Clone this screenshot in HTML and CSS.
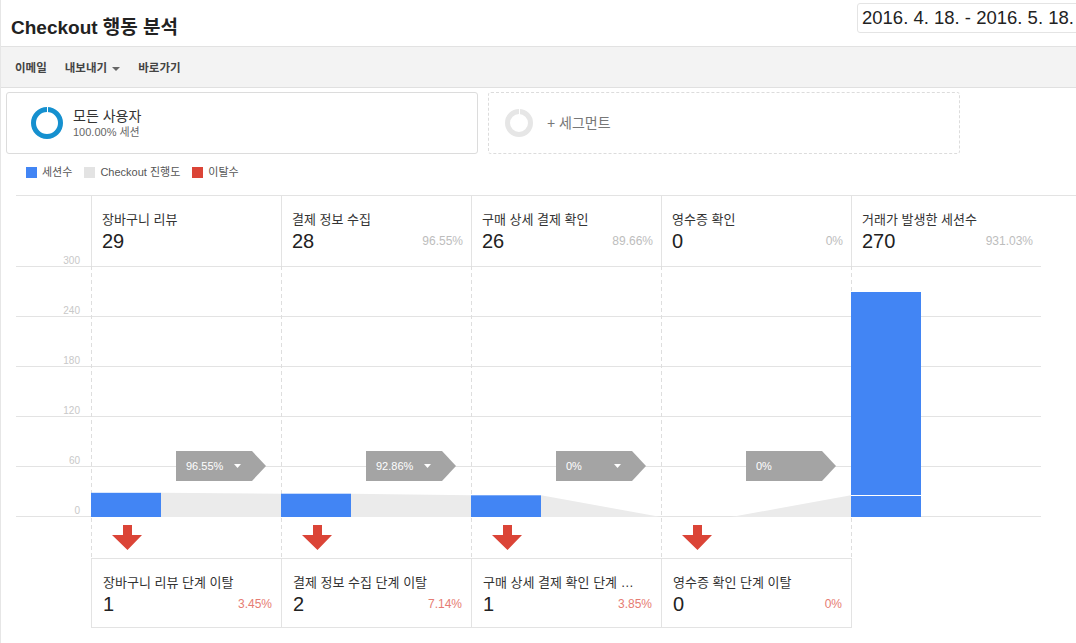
FILE: index.html
```html
<!DOCTYPE html>
<html lang="ko">
<head>
    <meta charset="UTF-8">
    <meta name="viewport" content="width=device-width, initial-scale=1.0">
    <title>Checkout 행동 분석</title>
    <link rel="stylesheet" href="styles.css">
</head>
<body>
<div class="page">
    <header class="report-header">
        <h1 class="report-title">Checkout 행동 분석</h1>
        <div class="date-range">2016. 4. 18. - 2016. 5. 18.</div>
    </header>

    <nav class="toolbar">
        <span class="tool">이메일</span>
        <span class="tool">내보내기 <span class="caret"></span></span>
        <span class="tool">바로가기</span>
    </nav>

    <section class="segments">
        <div class="segment-card">
            <svg class="donut" viewBox="0 0 32 32">
                <circle cx="16" cy="16" r="13.5" fill="none" stroke="#1590cf" stroke-width="5"/>
                <rect x="16" y="0" width="1" height="6" fill="#fff"/>
            </svg>
            <div>
                <div class="segment-name">모든 사용자</div>
                <div class="segment-sub">100.00% 세션</div>
            </div>
        </div>
        <div class="segment-card add">
            <svg class="donut small" viewBox="0 0 28 28">
                <circle cx="14" cy="14" r="11.5" fill="none" stroke="#e6e6e6" stroke-width="5"/>
                <rect x="14" y="0" width="1" height="6" fill="#fff"/>
            </svg>
            <div class="segment-add">+ 세그먼트</div>
        </div>
    </section>

    <ul class="legend">
        <li><span class="swatch sessions"></span>세션수</li>
        <li><span class="swatch progress"></span>Checkout 진행도</li>
        <li><span class="swatch exits"></span>이탈수</li>
    </ul>

    <section class="funnel">
        <div class="step-row">
            <div class="axis-cell"></div>
            <div class="step">
                <div class="step-name">장바구니 리뷰</div>
                <div class="step-value"><span class="num">29</span></div>
            </div>
            <div class="step">
                <div class="step-name">결제 정보 수집</div>
                <div class="step-value"><span class="num">28</span><span class="pct">96.55%</span></div>
            </div>
            <div class="step">
                <div class="step-name">구매 상세 결제 확인</div>
                <div class="step-value"><span class="num">26</span><span class="pct">89.66%</span></div>
            </div>
            <div class="step">
                <div class="step-name">영수증 확인</div>
                <div class="step-value"><span class="num">0</span><span class="pct">0%</span></div>
            </div>
            <div class="step">
                <div class="step-name">거래가 발생한 세션수</div>
                <div class="step-value"><span class="num">270</span><span class="pct">931.03%</span></div>
            </div>
        </div>

        <!-- plot: 250px tall, 300 sessions at the top -->
        <svg class="plot" width="1025" height="292" viewBox="0 0 1025 292">
            <g class="grid">
                <line x1="0" y1="0.5" x2="1025" y2="0.5"/>
                <line x1="0" y1="50.5" x2="1025" y2="50.5"/>
                <line x1="0" y1="100.5" x2="1025" y2="100.5"/>
                <line x1="0" y1="150.5" x2="1025" y2="150.5"/>
                <line x1="0" y1="200.5" x2="1025" y2="200.5"/>
                <line x1="0" y1="250.5" x2="1025" y2="250.5"/>
            </g>
            <g class="axis">
                <text x="64" y="-2.5">300</text>
                <text x="64" y="47.5">240</text>
                <text x="64" y="97.5">180</text>
                <text x="64" y="147.5">120</text>
                <text x="64" y="197.5">60</text>
                <text x="64" y="247.5">0</text>
            </g>
            <g class="cols">
                <line x1="75.5" y1="0" x2="75.5" y2="292"/>
                <line x1="265.5" y1="0" x2="265.5" y2="292"/>
                <line x1="455.5" y1="0" x2="455.5" y2="292"/>
                <line x1="645.5" y1="0" x2="645.5" y2="292"/>
                <line x1="835.5" y1="0" x2="835.5" y2="292"/>
            </g>
            <g class="flow">
                <polygon points="145,226.8 265,227.7 265,251 145,251"/>
                <polygon points="335,227.7 455,229.3 455,251 335,251"/>
                <polygon points="525,229.3 645,251 525,251"/>
                <polygon points="715,251 835,229.3 835,251"/>
            </g>
            <g class="bars">
                <rect x="75" y="226.8" width="70" height="24.2"/>
                <rect x="265" y="227.7" width="70" height="23.3"/>
                <rect x="455" y="229.3" width="70" height="21.7"/>
                <rect x="835" y="26" width="70" height="225"/>
                <line class="split" x1="835" y1="229.5" x2="905" y2="229.5"/>
            </g>
            <g class="tags">
                <polygon points="160,185 236,185 250,200 236,215 160,215"/>
                <text x="170" y="204">96.55%</text>
                <polygon class="tag-caret" points="218,198 225,198 221.5,202"/>

                <polygon points="350,185 426,185 440,200 426,215 350,215"/>
                <text x="360" y="204">92.86%</text>
                <polygon class="tag-caret" points="408,198 415,198 411.5,202"/>

                <polygon points="540,185 616,185 630,200 616,215 540,215"/>
                <text x="550" y="204">0%</text>
                <polygon class="tag-caret" points="598,198 605,198 601.5,202"/>

                <polygon points="730,185 806,185 820,200 806,215 730,215"/>
                <text x="740" y="204">0%</text>
            </g>
            <g class="exit-arrows">
                <polygon points="107,259 116,259 116,269 126,269 111.5,284 96,269 107,269"/>
                <polygon points="297,259 306,259 306,269 316,269 301.5,284 286,269 297,269"/>
                <polygon points="487,259 496,259 496,269 506,269 491.5,284 476,269 487,269"/>
                <polygon points="677,259 686,259 686,269 696,269 681.5,284 666,269 677,269"/>
            </g>
        </svg>

        <div class="exit-row">
            <div class="exit">
                <div class="exit-name">장바구니 리뷰 단계 이탈</div>
                <div class="step-value"><span class="num">1</span><span class="pct loss">3.45%</span></div>
            </div>
            <div class="exit">
                <div class="exit-name">결제 정보 수집 단계 이탈</div>
                <div class="step-value"><span class="num">2</span><span class="pct loss">7.14%</span></div>
            </div>
            <div class="exit">
                <div class="exit-name">구매 상세 결제 확인 단계 이탈</div>
                <div class="step-value"><span class="num">1</span><span class="pct loss">3.85%</span></div>
            </div>
            <div class="exit">
                <div class="exit-name">영수증 확인 단계 이탈</div>
                <div class="step-value"><span class="num">0</span><span class="pct loss">0%</span></div>
            </div>
        </div>
    </section>
</div>
</body>
</html>
```

FILE: styles.css
```css
body {
    margin: 0;
    font-family: "Liberation Sans", "Noto Sans CJK KR", Arial, sans-serif;
    color: #333;
    background: #fff;
    overflow: hidden;
}

.page {
    border-left: 1px solid #e6e6e6;
    min-height: 100vh;
}

/* title bar */
.report-header {
    display: flex;
    height: 46px;
    border-bottom: 1px solid #e2e2e2;
    overflow: hidden;
}

.report-title {
    width: 846px;
    flex-shrink: 0;
    margin: 0;
    padding: 17px 0 0 10px;
    font-size: 19px;
    line-height: 22px;
    font-weight: bold;
    color: #222;
}

.date-range {
    flex-shrink: 0;
    height: 28px;
    margin-top: 3px;
    padding: 0 4px;
    border: 1px solid #e4e4e4;
    border-radius: 3px;
    font-size: 18.5px;
    line-height: 28px;
    color: #222;
    white-space: nowrap;
}

/* actions */
.toolbar {
    display: flex;
    align-items: center;
    gap: 18px;
    height: 40px;
    padding-left: 14px;
    background: #f3f3f3;
    border-bottom: 1px solid #e0e0e0;
}

.tool {
    font-size: 11.5px;
    font-weight: bold;
    color: #444;
}

.caret {
    display: inline-block;
    width: 0;
    height: 0;
    margin-left: 2px;
    vertical-align: middle;
    border-left: 4px solid transparent;
    border-right: 4px solid transparent;
    border-top: 4px solid #666;
}

/* segments */
.segments {
    display: flex;
    gap: 10px;
    margin-top: 4px;
    padding-left: 5px;
}

.segment-card {
    display: flex;
    align-items: center;
    width: 472px;
    height: 62px;
    box-sizing: border-box;
    padding-left: 24px;
    border: 1px solid #dcdcdc;
    border-radius: 3px;
}

.segment-card.add {
    padding-left: 16px;
    padding-bottom: 3px;
    border-style: dashed;
}

.donut {
    width: 32px;
    height: 32px;
    margin-right: 10px;
}

.donut.small {
    width: 28px;
    height: 28px;
    margin-top: 3px;
    margin-right: 14px;
}

.segment-name {
    font-size: 14px;
    line-height: 18px;
    color: #333;
}

.segment-sub {
    font-size: 11px;
    line-height: 15px;
    color: #666;
}

.segment-add {
    font-size: 14px;
    color: #777;
}

/* legend */
.legend {
    display: flex;
    gap: 12px;
    margin: 12px 0 0;
    padding-left: 25px;
    list-style: none;
    font-size: 11px;
    line-height: 13px;
    color: #555;
}

.legend li {
    display: flex;
    align-items: center;
}

.swatch {
    width: 11px;
    height: 11px;
    margin-right: 5px;
}

.swatch.sessions { background: #4285f4; }
.swatch.progress { background: #e3e3e3; }
.swatch.exits { background: #db4437; }

/* funnel chart */
.funnel {
    margin: 16px 0 0 15px;
}

.step-row {
    display: grid;
    grid-template-columns: 75px repeat(5, 190px);
    border-top: 1px solid #e3e3e3;
}

.step {
    height: 70px;
    box-sizing: border-box;
    padding: 15px 8px 0 10px;
    border-left: 1px solid #e3e3e3;
}

.step-name,
.exit-name {
    font-size: 13px;
    line-height: 18px;
    color: #333;
    white-space: nowrap;
    overflow: hidden;
    text-overflow: ellipsis;
}

.exit-name {
    margin-right: 12px;
}

.step-value {
    display: flex;
    align-items: center;
    justify-content: space-between;
    height: 24px;
}

.num {
    font-size: 20px;
    color: #222;
}

.pct {
    font-size: 12px;
    color: #bdbdbd;
}

.pct.loss {
    color: #e67c73;
}

.plot {
    display: block;
    overflow: visible;
}

.plot .grid line {
    stroke: #e3e3e3;
    stroke-width: 1;
}

.plot .axis text {
    font-family: "Liberation Sans", Arial, sans-serif;
    font-size: 10px;
    fill: #c8c8c8;
    text-anchor: end;
}

.plot .cols line {
    stroke: #dedede;
    stroke-width: 1;
    stroke-dasharray: 4 3;
}

.plot .flow polygon {
    fill: #ebebeb;
}

.plot .bars rect {
    fill: #4285f4;
}

.plot .bars .split {
    stroke: #fff;
    stroke-width: 1;
}

.plot .tags polygon {
    fill: #a4a4a4;
}

.plot .tags .tag-caret {
    fill: #fff;
}

.plot .tags text {
    font-family: "Liberation Sans", Arial, sans-serif;
    font-size: 11px;
    fill: #fff;
}

.plot .exit-arrows polygon {
    fill: #db4437;
}

.exit-row {
    display: grid;
    grid-template-columns: repeat(4, 190px);
    width: 760px;
    margin-left: 75px;
    border-top: 1px solid #e3e3e3;
    border-bottom: 1px solid #e3e3e3;
    border-right: 1px solid #e3e3e3;
}

.exit {
    height: 68px;
    box-sizing: border-box;
    padding: 15px 9px 0 11px;
    border-left: 1px solid #e3e3e3;
}
```
